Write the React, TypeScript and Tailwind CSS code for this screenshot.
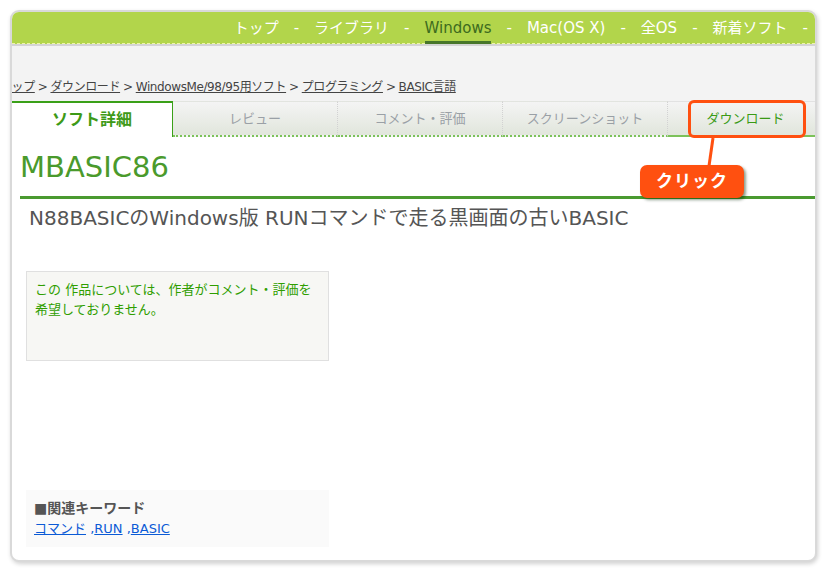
import { Fragment } from 'react';

const jp = '"DejaVu Sans", "Noto Sans CJK JP", sans-serif';

const navItems = ['トップ', 'ライブラリ', 'Windows', 'Mac(OS X)', '全OS', '新着ソフト'];
const crumbs = ['トップ', 'ダウンロード', 'WindowsMe/98/95用ソフト', 'プログラミング', 'BASIC言語'];
const tabs = ['レビュー', 'コメント・評価', 'スクリーンショット', 'ダウンロード'];

export default function App() {
  return (
    <div
      className="w-[827px] h-[572px] bg-white pl-[10px] pr-[10px] pt-[10px] overflow-hidden"
      style={{ fontFamily: jp }}
    >
      <div className="relative h-[552px] rounded-[9px] border-2 border-[#d9d9d9] bg-white shadow-[1px_2px_4px_rgba(0,0,0,0.18)] overflow-hidden flex flex-col">
        {/* global nav */}
        <div className="h-[32px] bg-[#b2d54b] border-b border-dashed border-[#eef5a8] flex items-center justify-end pr-[7px] pt-[2px] text-[15px] text-white shrink-0">
          {navItems.map((item) => (
            <Fragment key={item}>
              <span
                className={
                  item === 'Windows'
                    ? 'relative text-[#3d6b1e] after:absolute after:left-0 after:right-0 after:top-[24px] after:h-[3px] after:bg-[#47762a]'
                    : ''
                }
              >
                {item}
              </span>
              <span className="ml-[15px] mr-[15px] last:mr-0">-</span>
            </Fragment>
          ))}
        </div>
        <div className="h-[2px] bg-[#d4d4d4] shrink-0" />

        {/* breadcrumb */}
        <div className="h-[55px] bg-[#f3f3f3] flex items-end pb-[5px] text-[12px] text-[#444] shrink-0 overflow-hidden">
          <div className="-ml-[12px] flex whitespace-nowrap tracking-[-0.4px]">
            {crumbs.map((c, i) => (
              <Fragment key={c}>
                {i > 0 && <span className="mx-[3px]">&gt;</span>}
                <span className="underline">{c}</span>
              </Fragment>
            ))}
          </div>
        </div>

        {/* tabs */}
        <div className="flex h-[36px] bg-[#f3f3f3] shrink-0">
          <div className="w-[161px] shrink-0 bg-white border-t-2 border-r border-[#3aa018] flex items-center justify-center text-[16px] font-bold text-[#3d9a17]">
            ソフト詳細
          </div>
          {tabs.map((t, i) => (
            <div
              key={t}
              className={`flex items-center justify-center text-[13px] border-t border-[#e2e2e2] border-b-2 border-b-[#7cc25a] bg-gradient-to-b from-[#f4f4f4] to-[#e1e6dc] ${
                i < 3 ? 'w-[165px] shrink-0 border-r border-r-[#d2d2d2] border-dotted' : 'flex-1 pl-[8px]'
              } ${t === 'ダウンロード' ? 'text-[#3a9a16]' : 'text-[#9aa0a6]'}`}
            >
              {t}
            </div>
          ))}
        </div>

        {/* body */}
        <div className="flex flex-col pl-[8px]">
          <h1 className="mt-[14px] text-[29px] leading-[32px] text-[#4a9a2c]">MBASIC86</h1>
          <div className="mt-[13px] h-[3px] bg-[#4a9a30]" />
          <p className="mt-[7px] ml-[9px] text-[20px] leading-[24px] text-[#555]">
            N88BASICのWindows版 RUNコマンドで走る黒画面の古いBASIC
          </p>

          <div className="mt-[41px] ml-[6px] w-[303px] h-[90px] bg-[#f7f7f4] border border-[#e0e0e0] px-[8px] pt-[8px] text-[13px] leading-[20px] text-[#2f9e00]">
            この 作品については、作者がコメント・評価を
            <br />
            希望しておりません。
          </div>

          <div className="mt-[129px] ml-[6px] w-[303px] h-[57px] bg-[#fafafa] px-[8px] pt-[7px]">
            <div className="text-[14px] leading-[22px] font-bold text-[#555]">■関連キーワード</div>
            <div className="text-[13px] leading-[20px] text-[#0b5bd6]">
              <span className="underline">コマンド</span> ,<span className="underline">RUN</span> ,
              <span className="underline">BASIC</span>
            </div>
          </div>
        </div>

        {/* annotation */}
        <div className="absolute left-[676px] top-[88px] w-[118px] h-[38px] rounded-[6px] border-[3px] border-[#ff5010]" />
        <svg className="absolute left-[680px] top-[124px]" width="30" height="46">
          <line x1="21" y1="2" x2="15" y2="44" stroke="#ff5010" strokeWidth="3" />
        </svg>
        <div className="absolute left-[628px] top-[153px] w-[104px] h-[33px] rounded-[7px] bg-[#ff5010] shadow-[2px_2px_3px_rgba(0,40,0,0.45)] flex items-center justify-center text-white text-[17px] font-bold tracking-[1px]">
          クリック
        </div>
      </div>
    </div>
  );
}
